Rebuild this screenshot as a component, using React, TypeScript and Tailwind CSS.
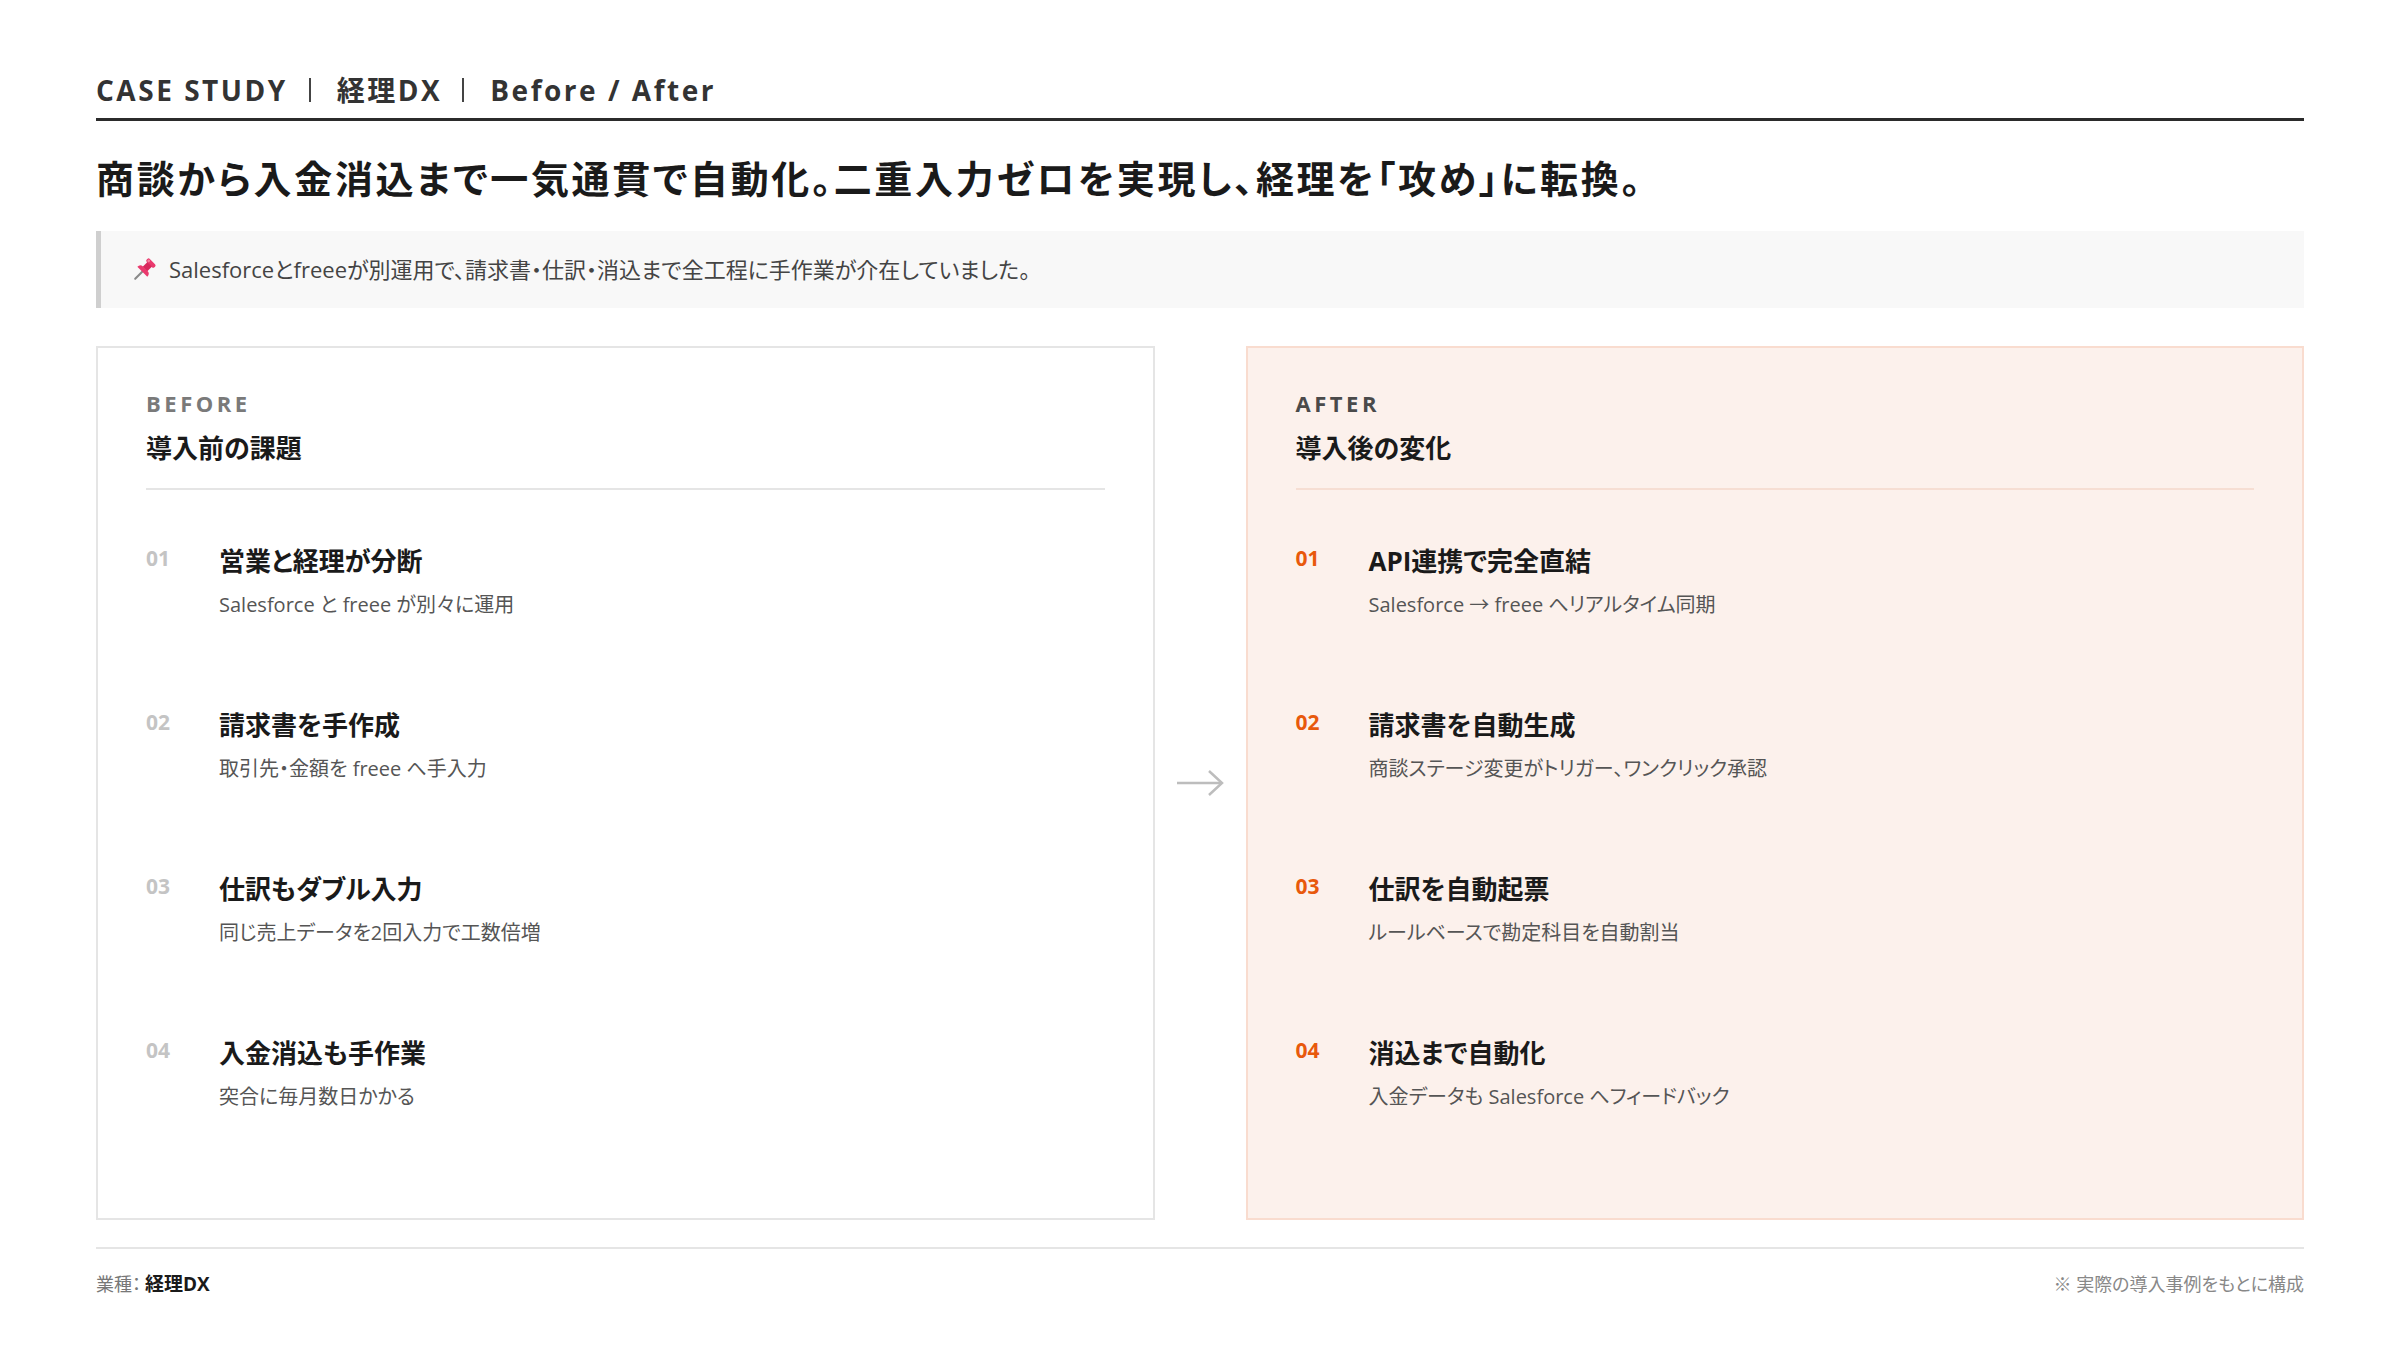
import React from "react";

type Item = { no: string; title: string; desc: string };

const beforeItems: Item[] = [
  { no: "01", title: "営業と経理が分断", desc: "Salesforce と freee が別々に運用" },
  { no: "02", title: "請求書を手作成", desc: "取引先・金額を freee へ手入力" },
  { no: "03", title: "仕訳もダブル入力", desc: "同じ売上データを2回入力で工数倍増" },
  { no: "04", title: "入金消込も手作業", desc: "突合に毎月数日かかる" },
];

const afterItems: Item[] = [
  { no: "01", title: "API連携で完全直結", desc: "Salesforce → freee へリアルタイム同期" },
  { no: "02", title: "請求書を自動生成", desc: "商談ステージ変更がトリガー、ワンクリック承認" },
  { no: "03", title: "仕訳を自動起票", desc: "ルールベースで勘定科目を自動割当" },
  { no: "04", title: "消込まで自動化", desc: "入金データも Salesforce へフィードバック" },
];

function PinIcon() {
  return (
    <svg width="26" height="26" viewBox="0 0 24 24" className="shrink-0">
      <g transform="rotate(45 12 12)">
        <line x1="12" y1="14" x2="12" y2="23.5" stroke="#8a8a8a" strokeWidth="1.9" strokeLinecap="round" />
        <rect x="7" y="1" width="10" height="4" rx="1.6" fill="#ea3a6e" />
        <rect x="9" y="4.5" width="6" height="6.5" fill="#d8285c" />
        <path d="M5.5 14.2 Q5.5 10.4 9 10.4 H15 Q18.5 10.4 18.5 14.2 Z" fill="#ea3a6e" />
        <rect x="8" y="1.8" width="2.2" height="2.4" rx="0.9" fill="#f5849f" />
      </g>
    </svg>
  );
}

function ArrowIcon() {
  return (
    <svg width="48" height="28" viewBox="0 0 48 28">
      <line x1="1" y1="14" x2="45" y2="14" stroke="#bdbdbd" strokeWidth="2.5" />
      <polyline points="33,2 46,14 33,26" fill="none" stroke="#bdbdbd" strokeWidth="2.5" />
    </svg>
  );
}

function Card({ variant, label, heading, items }: { variant: "before" | "after"; label: string; heading: string; items: Item[] }) {
  const isAfter = variant === "after";
  return (
    <div
      className={
        isAfter
          ? "border-2 border-[#f9dccf] bg-[#fcf1ec] px-[48px] pt-[40px] pb-[106px]"
          : "border-2 border-[#e5e5e5] bg-white px-[48px] pt-[40px] pb-[106px]"
      }
    >
      <div className={isAfter ? "pb-[22px] border-b-2 border-[#f6ded3]" : "pb-[22px] border-b-2 border-[#e5e5e5]"}>
        <div
          className={
            isAfter
              ? "text-[22px] leading-[30px] font-bold tracking-[0.16em] text-[#4a4a4a]"
              : "text-[22px] leading-[30px] font-bold tracking-[0.16em] text-[#7a7a7a]"
          }
        >
          {label}
        </div>
        <div className="mt-[12px] text-[26px] leading-[36px] font-bold text-[#1a1a1a]">{heading}</div>
      </div>
      <div className="pt-[53px] flex flex-col gap-[87px]">
        {items.map((it) => (
          <div key={it.no} className="flex">
            <div
              className={
                isAfter
                  ? "w-[73px] shrink-0 text-[21px] leading-[30px] font-bold text-[#e8590c]"
                  : "w-[73px] shrink-0 text-[21px] leading-[30px] font-bold text-[#c4c4c4]"
              }
            >
              {it.no}
            </div>
            <div>
              <div className="text-[26px] leading-[36px] font-bold text-[#1a1a1a]">{it.title}</div>
              <div className="mt-[11px] text-[20px] leading-[30px] text-[#555]">{it.desc}</div>
            </div>
          </div>
        ))}
      </div>
    </div>
  );
}

export default function App() {
  return (
    <div className="w-[2400px] h-[1350px] bg-white px-[96px] pt-[72px] font-['Open_Sans','Noto_Sans_CJK_JP',sans-serif] [font-feature-settings:'palt']">
      {/* Header */}
      <div className="flex items-center pb-[10px] border-b-[3px] border-[#2b2b2b] text-[28px] leading-[36px] font-bold tracking-[0.09em] text-[#333]">
        <span>CASE STUDY</span>
        <span className="inline-block w-[2px] h-[24px] bg-[#444] ml-[21px] mr-[26px]" />
        <span>経理DX</span>
        <span className="inline-block w-[2px] h-[24px] bg-[#444] ml-[20px] mr-[26px]" />
        <span>Before / After</span>
      </div>

      {/* Title */}
      <h1 className="mt-[33px] text-[38px] leading-[48px] font-bold tracking-[0.07em] text-[#1a1a1a]">
        商談から入金消込まで一気通貫で自動化。二重入力ゼロを実現し、経理を「攻め」に転換。
      </h1>

      {/* Callout */}
      <div className="mt-[29px] h-[77px] flex items-center gap-[12px] pl-[30px] border-l-[5px] border-[#cfcfcf] bg-[#f8f8f8]">
        <PinIcon />
        <span className="text-[22px] text-[#444]">
          Salesforceとfreeeが別運用で、請求書・仕訳・消込まで全工程に手作業が介在していました。
        </span>
      </div>

      {/* Before / After cards */}
      <div className="mt-[38px] grid grid-cols-[1fr_91px_1fr]">
        <Card variant="before" label="BEFORE" heading="導入前の課題" items={beforeItems} />
        <div className="flex items-center justify-center">
          <ArrowIcon />
        </div>
        <Card variant="after" label="AFTER" heading="導入後の変化" items={afterItems} />
      </div>

      {/* Footer */}
      <div className="mt-[27px] border-t-2 border-[#e5e5e5] pt-[22px] flex justify-between text-[18px] leading-[26px]">
        <div>
          <span className="text-[#777]">業種：</span>
          <span className="ml-[4px] text-[19px] font-bold text-[#1a1a1a]">経理DX</span>
        </div>
        <div className="text-[#888]">※ 実際の導入事例をもとに構成</div>
      </div>
    </div>
  );
}
